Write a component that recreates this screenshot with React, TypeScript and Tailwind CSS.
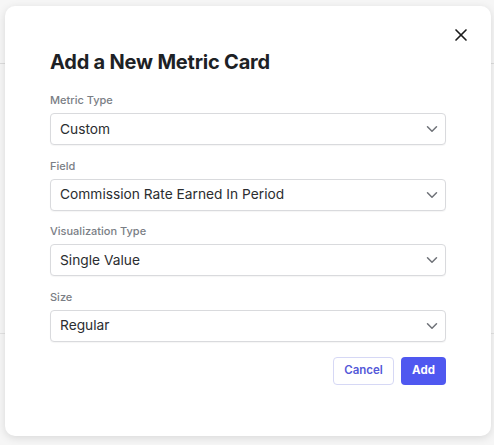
import React from "react";
import { ChevronDown, X } from "lucide-react";

const fields = [
  { label: "Metric Type", value: "Custom" },
  { label: "Field", value: "Commission Rate Earned In Period" },
  { label: "Visualization Type", value: "Single Value" },
  { label: "Size", value: "Regular" },
];

export default function App() {
  return (
    <div
      className="relative w-[494px] h-[445px] overflow-hidden bg-[#f6f6f6]"
      style={{ fontFamily: "Inter, 'Noto Sans', sans-serif" }}
    >
      <div className="absolute left-0 right-0 top-[63px] h-px bg-[#dcdcdc]" />
      <div className="absolute left-0 right-0 top-[333px] h-px bg-[#e2e2e2]" />
      <div className="absolute left-0 top-[6px] pl-[5px]">
        <div className="relative w-[486px] h-[430px] rounded-[10px] bg-white shadow-[0_2px_8px_rgba(0,0,0,0.12)] px-[45px] pt-[42px]">
          <button className="absolute right-[20px] top-[19px] text-[#1c1c1c]">
            <X size={20} strokeWidth={2} />
          </button>
          <h2 className="text-[20px] leading-[28px] font-bold text-[#1d2125] tracking-[-0.2px] mb-[16px]">
            Add a New Metric Card
          </h2>
          <div className="flex flex-col gap-[12.6px]">
            {fields.map((f) => (
              <div key={f.label} className="flex flex-col">
                <label className="text-[11px] leading-[16px] font-medium text-[#7a7e85] mb-[5px]">
                  {f.label}
                </label>
                <div className="h-[32px] rounded-[4px] border border-[#d9dadd] bg-white flex items-center justify-between pl-[9px] pr-[4px] shadow-[0_1px_1px_rgba(0,0,0,0.04)]">
                  <span className="text-[13.75px] text-[#2b2d30]">{f.value}</span>
                  <ChevronDown size={18} strokeWidth={2} className="text-[#6f7278]" />
                </div>
              </div>
            ))}
          </div>
          <div className="flex justify-end gap-[7px] mt-[15px]">
            <button className="h-[28px] w-[61px] rounded-[4px] border border-[#d6d8f5] bg-white text-[11.5px] font-semibold text-[#5458d8]">
              Cancel
            </button>
            <button className="h-[28px] w-[45px] rounded-[4px] bg-[#4f58f0] text-[11.5px] font-bold text-white">
              Add
            </button>
          </div>
        </div>
      </div>
    </div>
  );
}
